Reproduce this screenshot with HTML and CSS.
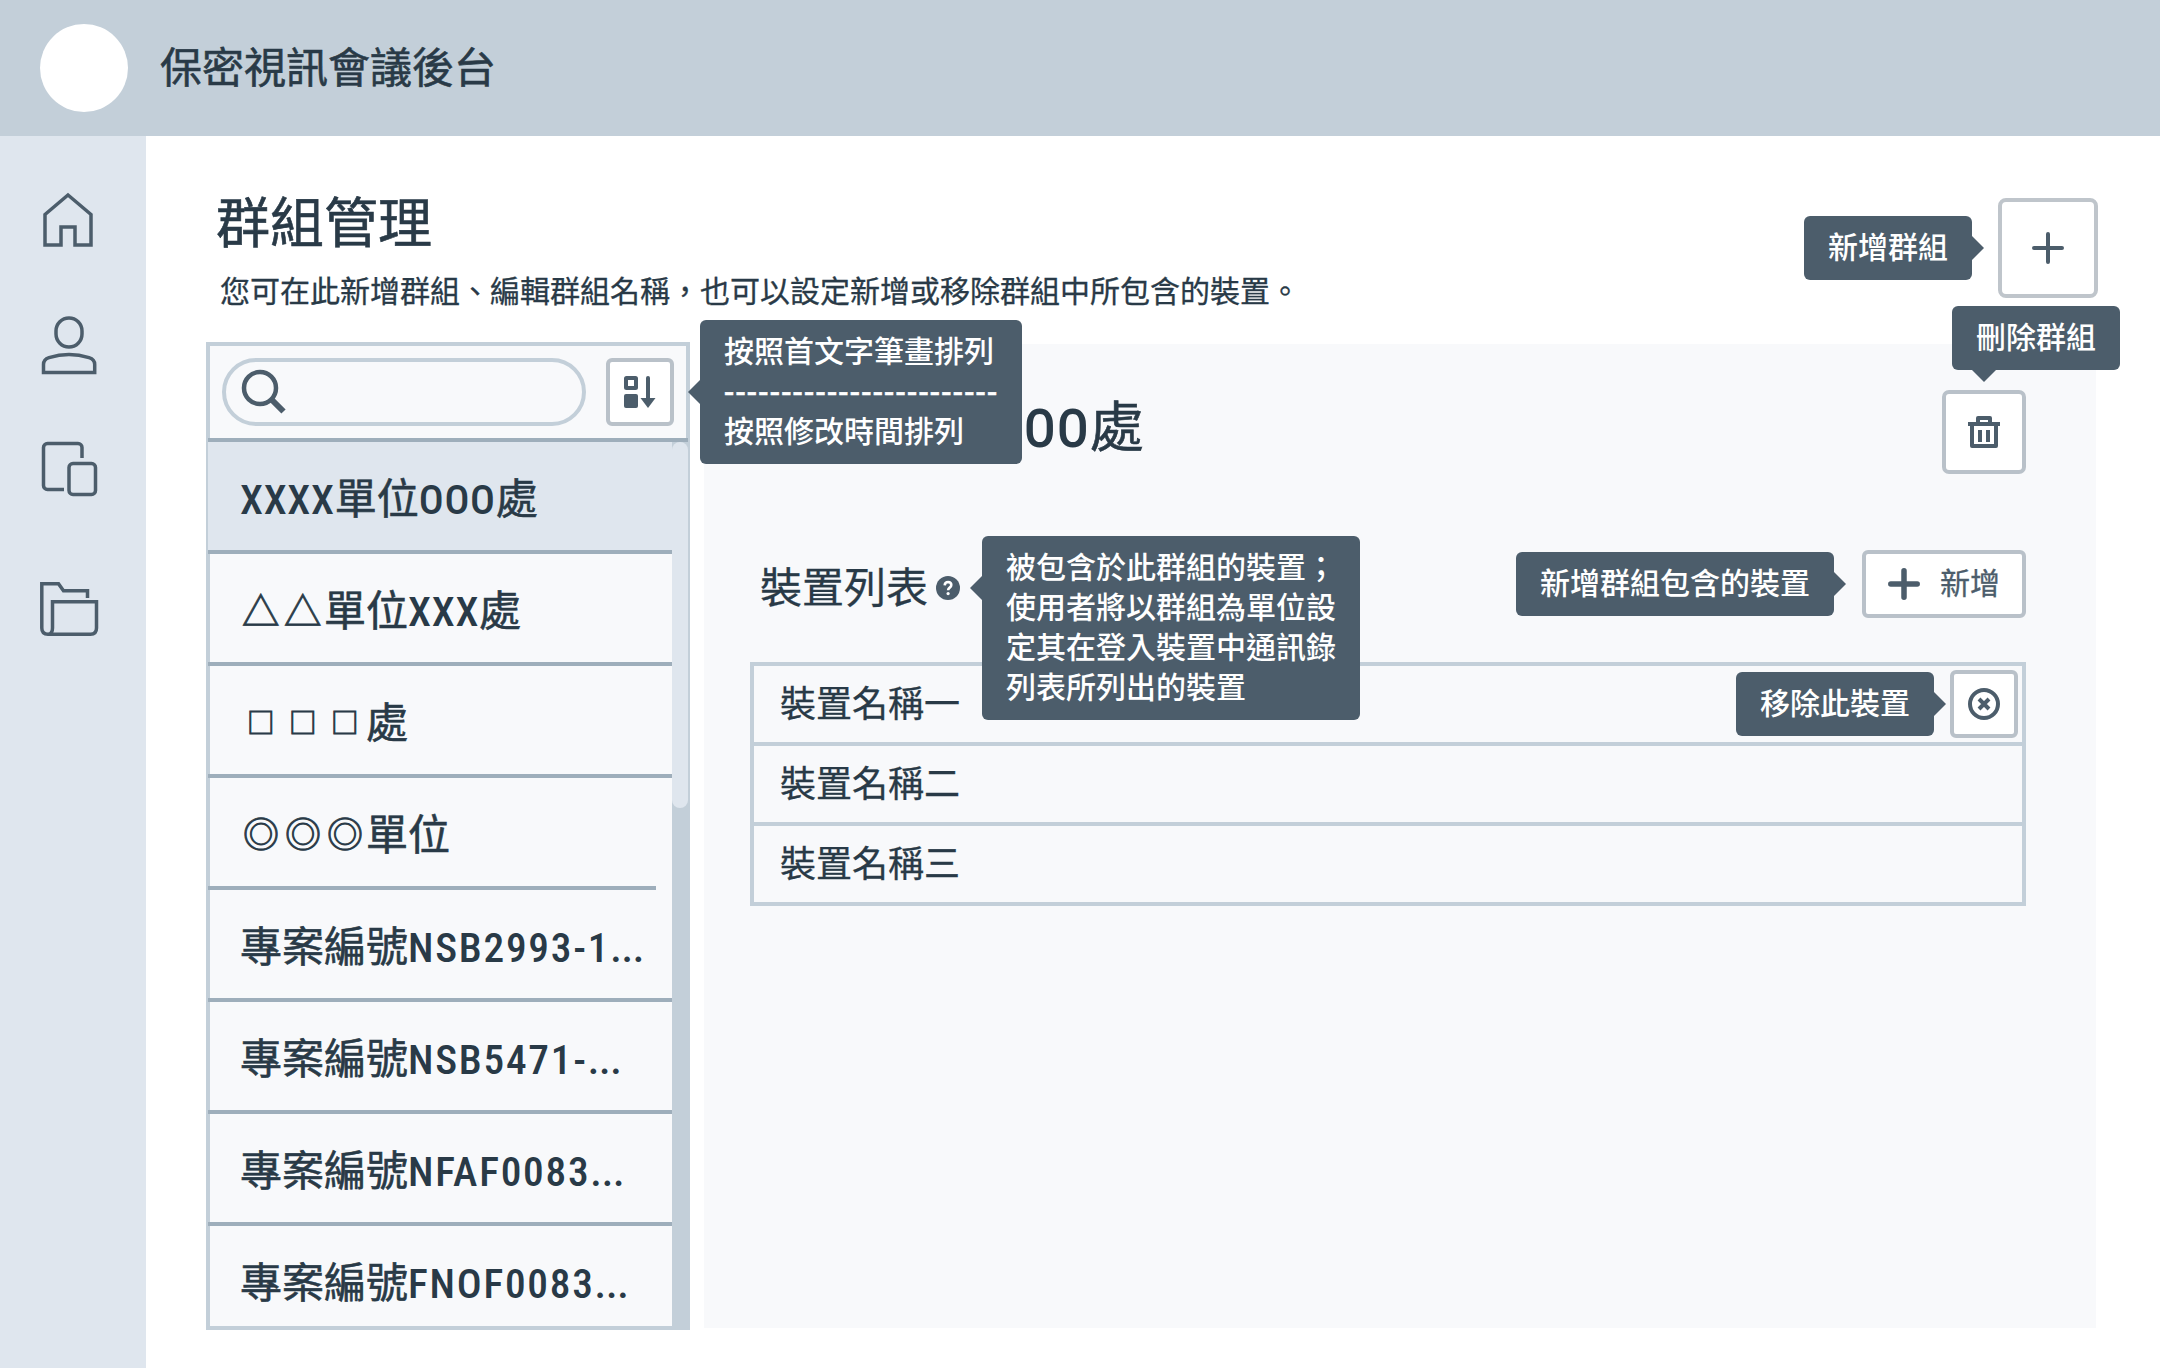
FILE: index.html
```html
<!DOCTYPE html>
<html lang="zh-Hant">
<head>
<meta charset="utf-8">
<title>保密視訊會議後台</title>
<link rel="stylesheet" href="styles.css">
</head>
<body>
<header class="topbar">
  <div class="logo"></div>
  <div class="brand">保密視訊會議後台</div>
</header>
<div class="shell">
  <nav class="sidebar">
    <svg class="nav-icon" viewBox="0 0 64 64"><path d="M32 5 55 24.5V55H39V37H25v18H9V24.5Z"/></svg>
    <svg class="nav-icon nav-user" viewBox="0 0 64 64"><rect x="20" y="4" width="26" height="29" rx="13"/><path d="M7.500 58.500V50.500Q7.500 45.500 13 43.700Q33 37.500 53 43.700Q58.700 45.500 58.700 50.500V58.500Z"/></svg>
    <svg class="nav-icon nav-device" viewBox="0 0 64 64"><path d="M46 24V13.500a4 4 0 0 0-4-4H11.500a4 4 0 0 0-4 4v38a4 4 0 0 0 4 4H28"/><rect x="33" y="29.500" width="26.500" height="31" rx="4"/></svg>
    <svg class="nav-icon nav-folder" viewBox="0 0 64 64"><path d="M51.500 20V12.800H27.500L22.500 5.700H5.800V50Q5.800 56.200 12 56.200Q16.500 56.200 16.500 50V23.700H60.500V50Q60.500 56.200 54.500 56.200H12"/></svg>
  </nav>
  <main class="main">
    <div class="page-head">
      <div>
        <h1>群組管理</h1>
        <p class="lead">您可在此新增群組、編輯群組名稱，也可以設定新增或移除群組中所包含的裝置。</p>
      </div>
      <div class="anchor">
        <button class="btn btn-lg"><svg width="32" height="32" viewBox="0 0 32 32"><path d="M16 2V30M2 16H30" stroke-width="4" stroke-linecap="round"/></svg></button>
        <div class="tip tip-left tip-add-group">新增群組</div>
      </div>
    </div>
    <div class="columns">
      <section class="groups">
        <div class="toolbar">
          <div class="search"><svg width="48" height="48" viewBox="0 0 48 48"><circle cx="22" cy="20" r="16" stroke-width="4.500"/><path d="M33.500 31.500 45.500 43.500" stroke-width="6"/></svg></div>
          <div class="anchor">
            <button class="btn btn-sm"><svg width="32" height="32" viewBox="0 0 32 32"><rect x="2" y="2" width="10" height="10" rx=".5" stroke-width="4"/><rect class="solid" x="0" y="18" width="14" height="14" rx="2"/><path d="M24 2V24" stroke-width="4" stroke-linecap="round"/><path class="solid" d="M16.500 22H31.500L24 32Z"/></svg></button>
            <div class="tip tip-right tip-sort">按照首文字筆畫排列<br><span class="dashes">------------------------</span><br>按照修改時間排列</div>
          </div>
        </div>
        <div class="list">
          <ul class="rows">
            <li class="selected"><span class="en">XXXX</span>單位<span class="en">OOO</span>處</li>
            <li><span class="tri">△△</span>單位<span class="en">XXX</span>處</li>
            <li><span class="box">□□□</span>處</li>
            <li class="short"><span class="ring">◎◎◎</span>單位</li>
            <li>專案編號<span class="en code">NSB2993-1<span class="dots">...</span></span></li>
            <li>專案編號<span class="en code">NSB5471-<span class="dots">...</span></span></li>
            <li>專案編號<span class="en code">NFAF0083<span class="dots">...</span></span></li>
            <li>專案編號<span class="en code">FNOF0083<span class="dots">...</span></span></li>
          </ul>
          <div class="track"><div class="thumb"></div></div>
        </div>
      </section>
      <section class="detail">
        <div class="detail-head">
          <h2><span class="en">XXXX</span>單位<span class="en">OOO</span>處</h2>
          <div class="anchor">
            <button class="btn btn-md"><svg width="32" height="32" viewBox="0 0 32 32"><path d="M10 8V2H22V8" stroke-width="4" stroke-linejoin="round"/><path d="M0 8H32M4 8V30H28V8M12 14V26M20 14V26" stroke-width="4" stroke-linejoin="round"/></svg></button>
            <div class="tip tip-up tip-delete">刪除群組</div>
          </div>
        </div>
        <div class="device-head">
          <h3>裝置列表</h3>
          <div class="anchor help">
            <svg width="24" height="24" viewBox="0 0 24 24"><circle class="solid" cx="12" cy="12" r="12"/><path class="mark" d="M8.700 9.300Q8.900 6 12.100 6Q15.300 6.100 15.300 9Q15.300 10.400 13.700 11.600Q12.100 12.800 12.100 14.300"/><circle class="dot" cx="12.100" cy="17.600" r="1.600"/></svg>
            <div class="tip tip-right tip-help">被包含於此群組的裝置；<br>使用者將以群組為單位設<br>定其在登入裝置中通訊錄<br>列表所列出的裝置</div>
          </div>
          <div class="anchor push">
            <button class="btn btn-text"><svg width="32" height="32" viewBox="0 0 32 32"><path d="M16 2.800V29.200M2.800 16H29.200" stroke-width="5.500" stroke-linecap="round"/></svg><span>新增</span></button>
            <div class="tip tip-left tip-add-device">新增群組包含的裝置</div>
          </div>
        </div>
        <ul class="devices">
          <li><span>裝置名稱一</span>
            <div class="anchor push">
              <button class="btn btn-sm"><svg width="32" height="32" viewBox="0 0 32 32"><circle cx="16" cy="16" r="14" stroke-width="4"/><path d="M11 11 21 21M21 11 11 21" stroke-width="4"/></svg></button>
              <div class="tip tip-left tip-remove">移除此裝置</div>
            </div>
          </li>
          <li><span>裝置名稱二</span></li>
          <li><span>裝置名稱三</span></li>
        </ul>
      </section>
    </div>
  </main>
</div>
</body>
</html>
```
FILE: styles.css
```css
* { box-sizing: border-box; margin: 0; padding: 0; }
body {
  width: 2160px; height: 1368px; overflow: hidden;
  display: flex; flex-direction: column;
  background: #fff; color: #293a47;
  font-family: "Noto Sans CJK TC", sans-serif; font-weight: 400;
}
h1, h2, h3 { font-weight: 400; white-space: nowrap; }
ul { list-style: none; }
svg { display: block; fill: none; stroke: #4c5d6b; }
.solid { fill: #4c5d6b; stroke: none; }

.topbar { height: 136px; padding: 0 40px; display: flex; align-items: center; gap: 32px; background: #c3cfd9; }
.logo { width: 88px; height: 88px; border-radius: 50%; background: #fff; }
.brand { font-size: 42px; line-height: 60px; margin-top: -6px; }
.brand, h1, h2, .rows { -webkit-text-stroke: .6px; }
.lead, h3, .devices li > span, .btn-text { -webkit-text-stroke: .3px; }

.shell { flex: 1; display: flex; min-height: 0; }
.sidebar { width: 146px; padding: 54px 0 0 36px; display: flex; flex-direction: column; background: #dfe6ee; }
.nav-icon { width: 64px; height: 64px; stroke-width: 3.500px; }
.nav-user { margin-top: 60px; }
.nav-device { margin-top: 56px; }
.nav-folder { margin-top: 80px; }

.main { flex: 1; padding: 48px 62px 38px 60px; display: flex; flex-direction: column; }
.page-head { height: 158px; padding: 14px 0 0 10px; display: flex; justify-content: space-between; }
h1 { font-size: 54px; line-height: 42px; padding-top: 1px; height: 69px; }
.lead { font-size: 30px; line-height: 44px; padding-left: 4px; white-space: nowrap; }

.anchor { position: relative; flex: none; }
.push { margin-left: auto; }
.btn {
  display: flex; align-items: center; justify-content: center;
  border: 4px solid #b9c1c9; border-radius: 6px; background: #fff;
  color: #4c5d6b; font: inherit; font-size: 30px;
}
.btn-lg { width: 100px; height: 100px; border-color: #bfc5cb; border-radius: 8px; }
.btn-md { width: 84px; height: 84px; border-radius: 7px; }
.btn-sm { width: 68px; height: 68px; }
.btn-text { width: 164px; height: 68px; gap: 20px; }
.btn-text span { line-height: 40px; margin-top: -6px; }

.tip {
  position: absolute; z-index: 2; padding: 9px 24px 15px;
  border-radius: 6px; background: #4c5d6b; color: #fff;
  font-size: 30px; line-height: 40px; font-weight: 500; white-space: nowrap;
}
.tip::after { content: ""; position: absolute; border: 12px solid transparent; }
.tip-left { right: 100%; }
.tip-left::after { left: 100%; top: 50%; margin-top: -12px; border-left-color: #4c5d6b; border-right-width: 0; }
.tip-right { left: 100%; }
.tip-right::after { right: 100%; top: 50%; margin-top: -12px; border-right-color: #4c5d6b; border-left-width: 0; }
.tip-up::after { top: 100%; left: 20px; border-top-color: #4c5d6b; border-bottom-width: 0; }
.tip-add-group { top: 18px; margin-right: 26px; }
.tip-sort { top: -38px; margin-left: 26px; width: 322px; }
.tip-delete { bottom: 104px; left: 10px; }
.tip-help { top: -40px; margin-left: 22px; }
.tip-help::after { top: 52px; }
.tip-add-device { top: 2px; margin-right: 28px; }
.tip-remove { top: 2px; margin-right: 16px; }
.dashes { font-family: Roboto, sans-serif; letter-spacing: 1.240px; line-height: 0; vertical-align: -1px; -webkit-text-stroke: .5px; }

.columns { flex: 1; display: flex; gap: 14px; min-height: 0; }
.groups { width: 484px; height: 988px; border: 4px solid #c3cfd9; background: #f8f9fb; display: flex; flex-direction: column; }
.toolbar { height: 92px; padding: 12px 12px 0; display: flex; justify-content: space-between; }
.search { width: 364px; height: 68px; border: 4px solid #c3cfd9; border-radius: 34px; padding: 6px 0 0 12px; }
.list { flex: 1; display: flex; min-height: 0; margin: 0 -2px; border-top: 4px solid #9eaebb; background: #f8f9fb; }
.rows { width: 464px; height: 884px; overflow: hidden; }
.rows li {
  --line: 464px;
  height: 112px; padding: 0 0 0 32px;
  font-size: 42px; line-height: 108px; white-space: nowrap;
  background:
    linear-gradient(#9eaebb, #9eaebb) 0 100% / var(--line) 4px no-repeat,
    linear-gradient(#c3cfd9, #c3cfd9) 0 0 / 2px 100% no-repeat;
}
.rows .selected { background: #dfe6ee linear-gradient(#9eaebb, #9eaebb) 0 100% / 100% 4px no-repeat; }
.rows .short { --line: 448px; }
.track { width: 16px; background: #c3cfd9; }
.thumb { height: 366px; border-radius: 8px; background: #dfe6ee; }
.en {
  font-family: "Roboto Condensed", Roboto, sans-serif; font-stretch: 75%; font-weight: 500;
  font-size: .985em; letter-spacing: .017em; line-height: 0; -webkit-text-stroke: 0;
}
.code { letter-spacing: .042em; }
.dots { letter-spacing: -.005em; }
.tri, .box, .ring { line-height: 0; -webkit-text-stroke: .9px; }
.tri { font-size: 37.500px; letter-spacing: 4.500px; margin: 0 -2px 0 2px; vertical-align: 1.500px; }
.box { font-size: 27.500px; letter-spacing: 14.500px; margin: 0 -7px 0 7px; vertical-align: 5.500px; }
.ring { font-size: 36px; letter-spacing: 6px; margin: 0 -3px 0 3px; vertical-align: 2px; }

.detail { width: 1392px; height: 984px; margin-top: 2px; padding: 46px 70px 0 46px; background: #f8f9fb; }
.detail-head { height: 160px; padding-left: 11px; display: flex; justify-content: space-between; align-items: flex-start; }
h2 { font-size: 54px; line-height: 67px; }
.device-head { height: 68px; padding-left: 10px; display: flex; align-items: flex-start; }
h3 { font-size: 42px; line-height: 69px; }
.help { width: 24px; height: 24px; margin: 26px 0 0 8px; }
.mark { stroke: #fff; stroke-width: 2.600px; }
.dot { fill: #fff; stroke: none; }
.devices { margin-top: 44px; border: 4px solid #c3cfd9; }
.devices li { height: 80px; padding: 0 4px 0 26px; display: flex; align-items: center; border-bottom: 4px solid #c3cfd9; font-size: 36px; line-height: 50px; }
.devices li:last-child { height: 76px; border-bottom: 0; }
.devices li > span { margin-top: -6px; }
```
